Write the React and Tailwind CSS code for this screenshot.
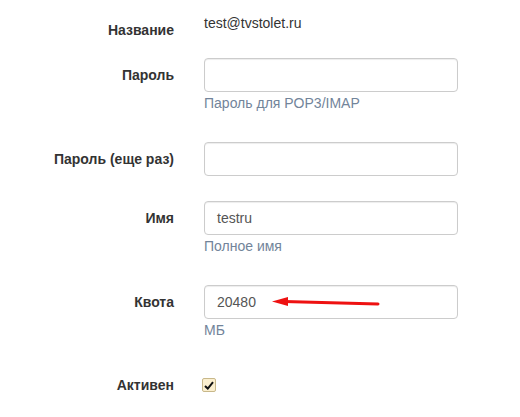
import React from 'react';

const font = { fontFamily: '"Liberation Sans", Arial, sans-serif' };

function Label({ children, className = '' }) {
  return (
    <div className={`w-[174px] shrink-0 text-right text-[14px] leading-[20px] font-bold text-[#333] ${className}`}>
      {children}
    </div>
  );
}

function Input({ value = '', children }) {
  return (
    <div className="relative flex h-[34px] w-[254px] items-center rounded-[4px] border border-[#ccc] bg-white px-[12px] text-[14px] text-[#555] shadow-[inset_0_1px_1px_rgba(0,0,0,0.075)]">
      {value}
      {children}
    </div>
  );
}

function Help({ children }) {
  return <div className="mt-[1px] text-[14px] leading-[20px] text-[#72849a]">{children}</div>;
}

function Row({ label, labelPt = 'pt-[7px]', className = '', children }) {
  return (
    <div className={`flex items-start gap-[30px] ${className}`}>
      <Label className={labelPt}>{label}</Label>
      <div className="flex flex-col">{children}</div>
    </div>
  );
}

export default function App() {
  return (
    <div className="h-[417px] w-[520px] overflow-hidden bg-white" style={font}>
      {/* Название */}
      <Row label="Название" labelPt="pt-[20px]">
        <div className="pt-[13px] text-[14px] leading-[20px] text-[#333]">test@tvstolet.ru</div>
      </Row>

      {/* Пароль */}
      <Row label="Пароль" className="mt-[18px]">
        <Input />
        <Help>Пароль для POP3/IMAP</Help>
      </Row>

      {/* Пароль (еще раз) */}
      <Row label="Пароль (еще раз)" className="mt-[29px]">
        <Input />
      </Row>

      {/* Имя */}
      <Row label="Имя" className="mt-[25px]">
        <Input value="testru" />
        <Help>Полное имя</Help>
      </Row>

      {/* Квота */}
      <Row label="Квота" className="mt-[29px]">
        <Input value="20480">
          <svg className="absolute left-[67px] top-[9px]" width="110" height="14" viewBox="0 0 110 14">
            <line x1="12" y1="6.5" x2="106" y2="9" stroke="#ee1111" strokeWidth="3" strokeLinecap="round" />
            <polygon points="0,6.5 16,2 16,11" fill="#ee1111" />
          </svg>
        </Input>
        <Help>МБ</Help>
      </Row>

      {/* Активен */}
      <div className="mt-[35px] flex items-center gap-[28px]">
        <Label>Активен</Label>
        <span className="flex h-[14px] w-[14px] items-center justify-center rounded-[2px] border border-[#c8b88a] bg-[#fbefcf]">
          <svg width="10" height="9" viewBox="0 0 10 9">
            <path d="M1 5 L3.8 7.6 L9 1.2" fill="none" stroke="#111" strokeWidth="2" />
          </svg>
        </span>
      </div>
    </div>
  );
}
